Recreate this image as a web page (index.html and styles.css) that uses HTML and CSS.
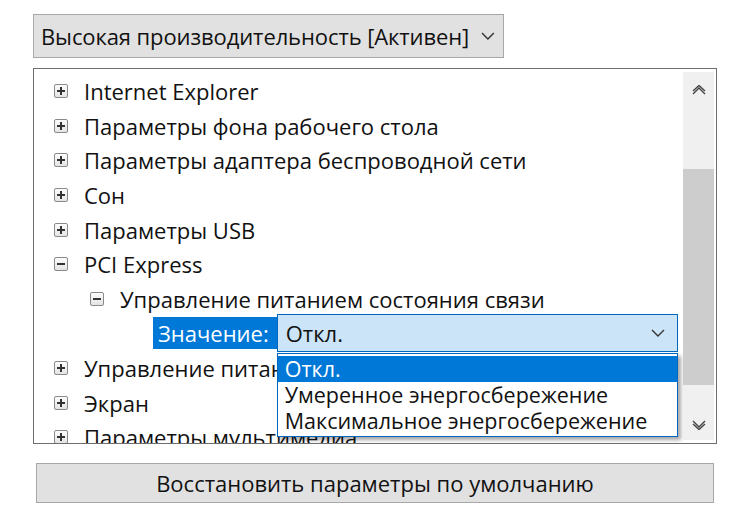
FILE: index.html
```html
<!DOCTYPE html>
<html lang="ru">
<head>
    <meta charset="UTF-8">
    <meta name="viewport" content="width=device-width, initial-scale=1.0">
    <title>Электропитание</title>
    <link rel="stylesheet" href="styles.css">
</head>
<body>
    <div class="window">
        <div class="plan-select">
            <span>Высокая производительность [Активен]</span>
            <svg class="chev" width="14" height="8" viewBox="0 0 14 8"><path d="M1 1 L7 7 L13 1" fill="none" stroke="#333" stroke-width="1.4"/></svg>
        </div>

        <div class="tree-box">
            <div class="tree">
                <div class="row"><span class="exp plus"></span>Internet Explorer</div>
                <div class="row"><span class="exp plus"></span>Параметры фона рабочего стола</div>
                <div class="row"><span class="exp plus"></span>Параметры адаптера беспроводной сети</div>
                <div class="row"><span class="exp plus"></span>Сон</div>
                <div class="row"><span class="exp plus"></span>Параметры USB</div>
                <div class="row"><span class="exp minus"></span>PCI Express</div>
                <div class="row sub"><span class="exp minus"></span>Управление питанием состояния связи</div>
                <div class="row value-row">
                    <span class="value-label">Значение:</span>
                    <div class="value-select">
                        <span>Откл.</span>
                        <svg width="14" height="8" viewBox="0 0 14 8"><path d="M1 1 L7 7 L13 1" fill="none" stroke="#333" stroke-width="1.4"/></svg>
                        <ul class="options">
                            <li class="selected">Откл.</li>
                            <li>Умеренное энергосбережение</li>
                            <li>Максимальное энергосбережение</li>
                        </ul>
                    </div>
                </div>
                <div class="row"><span class="exp plus"></span>Управление питанием процессора</div>
                <div class="row"><span class="exp plus"></span>Экран</div>
                <div class="row"><span class="exp plus"></span>Параметры мультимедиа</div>
            </div>
            <div class="scrollbar">
                <svg class="arrow" width="14" height="10" viewBox="0 0 14 10"><path d="M1 9 L7 3 L13 9 M1 6 L7 0.5 L13 6" fill="none" stroke="#444" stroke-width="1.4"/></svg>
                <div class="track"><div class="thumb"></div></div>
                <svg class="arrow" width="14" height="10" viewBox="0 0 14 10"><path d="M1 1 L7 7 L13 1 M1 4 L7 9.5 L13 4" fill="none" stroke="#444" stroke-width="1.4"/></svg>
            </div>
        </div>

        <button class="restore">Восстановить параметры по умолчанию</button>
    </div>
</body>
</html>
```

FILE: styles.css
```css
body {
    margin: 0;
    background-color: #fff;
    font-family: "Open Sans", "Noto Sans", sans-serif;
    color: #111;
}

.window {
    display: flex;
    flex-direction: column;
    align-items: flex-start;
    padding: 14px 0 0 33px;
}

.plan-select {
    display: flex;
    align-items: center;
    gap: 12px;
    box-sizing: border-box;
    width: 471px;
    height: 44px;
    padding: 0 8px 0 7px;
    background-color: #e1e1e1;
    border: 1px solid #a8a8a8;
    font-size: 22px;
    letter-spacing: -0.1px;
    white-space: nowrap;
}

.tree-box {
    display: flex;
    box-sizing: border-box;
    width: 684px;
    height: 376px;
    margin-top: 10px;
    border: 1px solid #6e6e6e;
    background-color: #fff;
}

.tree {
    flex: 1;
    overflow: hidden;
    padding-top: 5px;
}

.row {
    display: flex;
    align-items: center;
    height: 34.6px;
    padding-left: 20px;
    font-size: 22px;
    white-space: nowrap;
}

.row.sub {
    padding-left: 56px;
}

.exp {
    display: inline-block;
    position: relative;
    box-sizing: border-box;
    width: 14px;
    height: 14px;
    margin-right: 16px;
    border: 1px solid #8a8a8a;
    border-radius: 2px;
    background: linear-gradient(#fdfdfd, #e4e4e4);
}

.exp::before,
.plus::after {
    content: "";
    position: absolute;
    background-color: #333;
}

.exp::before {
    left: 2px;
    right: 2px;
    top: 5px;
    height: 2px;
}

.plus::after {
    top: 2px;
    bottom: 2px;
    left: 5px;
    width: 2px;
}

.value-row {
    padding-left: 119px;
    position: relative;
    z-index: 2;
}

.value-label {
    display: flex;
    align-items: center;
    height: 32px;
    padding: 0 8px 0 5px;
    background-color: #0078d7;
    color: #fff;
}

.value-select {
    position: relative;
    display: flex;
    align-items: center;
    justify-content: space-between;
    box-sizing: border-box;
    width: 401px;
    height: 38px;
    padding: 0 12px 0 8px;
    background-color: #cce4f7;
    border: 1px solid #0067c0;
}

.options {
    position: absolute;
    top: 38px;
    left: -1px;
    width: 401px;
    box-sizing: border-box;
    margin: 0;
    padding: 2px 0 2px;
    list-style: none;
    background-color: #fff;
    border: 1px solid #0067c0;
    box-shadow: 3px 3px 4px rgba(0, 0, 0, 0.35);
}

.options li {
    height: 26px;
    line-height: 26px;
    padding-left: 7px;
    font-size: 21.5px;
}

.options li.selected {
    background-color: #0078d7;
    color: #fff;
}

.scrollbar {
    display: flex;
    flex-direction: column;
    align-items: center;
    width: 31px;
    margin: 3px 2px 3px 0;
    background-color: #f0f0f0;
}

.arrow {
    margin: 13px 0 10px;
}

.track {
    flex: 1;
    width: 100%;
}

.thumb {
    width: 100%;
    height: 216px;
    margin-top: 64px;
    background-color: #cdcdcd;
}

.restore {
    box-sizing: border-box;
    width: 678px;
    height: 40px;
    margin: 19px 0 0 3px;
    background-color: #e1e1e1;
    border: 1px solid #a8a8a8;
    font-family: "Open Sans", "Noto Sans", sans-serif;
    font-size: 22px;
    color: #111;
}
```
